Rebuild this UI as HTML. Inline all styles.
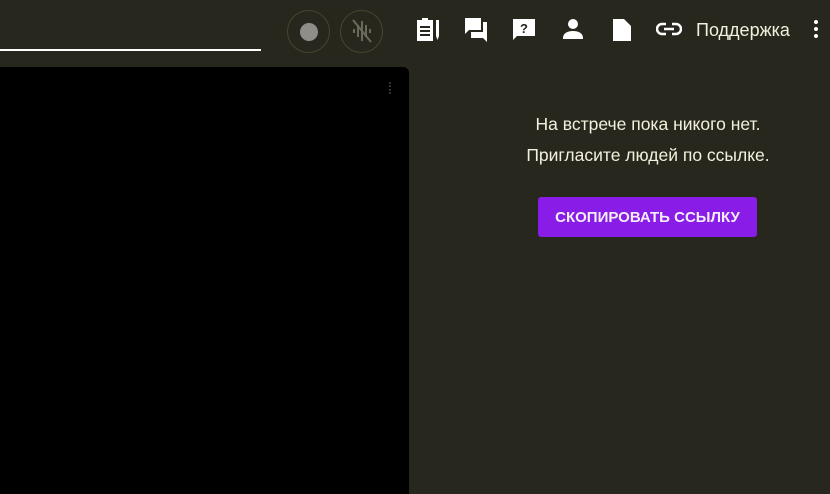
<!DOCTYPE html>
<html><head><meta charset="utf-8"><style>
html,body{margin:0;padding:0;width:830px;height:494px;overflow:hidden;background:#27271d;font-family:"Liberation Sans","DejaVu Sans",sans-serif;position:relative}
.line{position:absolute;left:0;top:49px;width:261px;height:2px;background:#fff}
.panel{position:absolute;left:0;top:67px;width:409px;height:427px;background:#000;border-radius:0 6px 0 0}
.circ{position:absolute;top:10px;width:43px;height:43px;border:1px solid #47452f;border-radius:50%;box-sizing:border-box}
.ic{position:absolute;top:18px}
.txt{position:absolute;color:#f3f1dd;font-size:17.5px;left:498px;width:300px;text-align:center}
.btn{position:absolute;left:538px;top:197px;width:219px;height:40px;background:#8a1ce8;border-radius:3px;color:#f4eef8;font-size:15px;font-weight:bold;display:flex;align-items:center;justify-content:center}
.sup{position:absolute;left:696px;top:20px;color:#f3f1dd;font-size:18px}
</style></head><body>
<div class="line"></div>
<div class="panel"></div>
<div style="position:absolute;left:389px;top:82px;width:3px;height:12px;border-left:2px dotted #333"></div>
<div class="circ" style="left:287px"></div>
<div style="position:absolute;left:300px;top:23px;width:18px;height:18px;border-radius:50%;background:#8e8d88"></div>
<div class="circ" style="left:340px"></div>
<svg class="ic" style="left:348px;top:16px" width="28" height="30" viewBox="0 0 28 30" stroke="#6b6a5a" stroke-width="2" fill="none"><path d="M6 13v4M10 9v12M14 5v20M18 9v12M22 13v4M5 4l18 22"/></svg>
<svg class="ic" style="left:415px" width="26" height="24" viewBox="0 0 26 24" fill="#fff"><path d="M2 2h5V0h6v2h5v21H2z"/><path d="M5 8h10v2H5zM5 12h10v2H5zM5 16h10v2H5z" fill="#27271d"/><path d="M21 2h3v16l-1.5 4-1.5-4z"/></svg>
<svg class="ic" style="left:465px" width="24" height="24" viewBox="0 0 24 24" fill="#fff"><path d="M0 0h16v12H4l-4 4z"/><path d="M6 14h12V4h4v20l-4-4H6z"/></svg>
<svg class="ic" style="left:512px" width="24" height="24" viewBox="0 0 24 24" fill="#fff"><path d="M1 1h22v17H5l-4 4z"/><text x="12" y="15" font-size="13" font-weight="bold" text-anchor="middle" fill="#27271d" font-family="Liberation Sans">?</text></svg>
<svg class="ic" style="left:563px" width="20" height="22" viewBox="0 0 20 22" fill="#fff"><circle cx="10" cy="6" r="5"/><path d="M0 20c0-5 5-7 10-7s10 2 10 7v1H0z"/></svg>
<svg class="ic" style="left:612px" width="20" height="24" viewBox="0 0 20 24" fill="#fff"><path d="M1 1h11l7 7v15H1z"/></svg>
<svg class="ic" style="left:656px;top:20px" width="26" height="18" viewBox="0 0 26 18" fill="none" stroke="#fff" stroke-width="2.5"><path d="M10 4H6a5 5 0 0 0 0 10h4M16 4h4a5 5 0 0 1 0 10h-4M8 9h10"/></svg>
<div class="sup">Поддержка</div>
<svg class="ic" style="left:813px;top:19px" width="6" height="20" viewBox="0 0 6 20" fill="#fff"><circle cx="3" cy="3" r="2"/><circle cx="3" cy="10" r="2"/><circle cx="3" cy="17" r="2"/></svg>
<div class="txt" style="top:114px">На встрече пока никого нет.</div>
<div class="txt" style="top:145px">Пригласите людей по ссылке.</div>
<div class="btn">СКОПИРОВАТЬ ССЫЛКУ</div>
</body></html>
